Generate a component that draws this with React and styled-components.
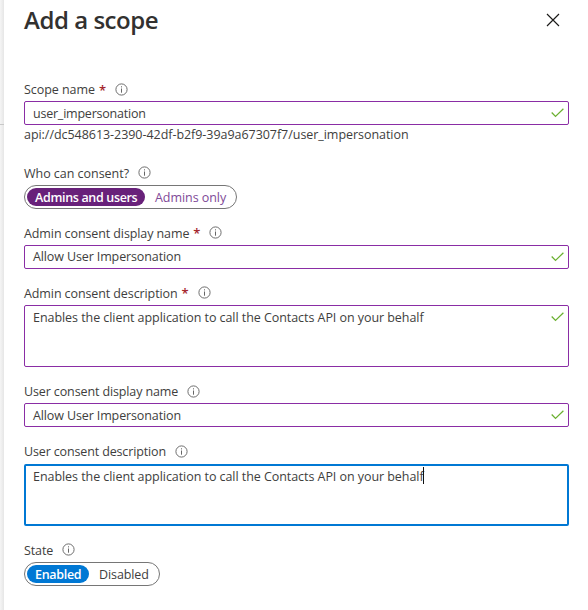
import React from 'react';
import styled, { createGlobalStyle } from 'styled-components';

const GlobalStyle = createGlobalStyle`
  * { box-sizing: border-box; }
  body {
    margin: 0;
    background: #fff;
    color: #403e3d;
    font: 12.5px/18px "Open Sans", "Noto Sans", sans-serif;
  }
  button { font: inherit; color: inherit; background: none; border: 0; padding: 0; }
`;

const Screen = styled.div`
  display: flex;
  width: 588px;
  height: 610px;
  overflow: hidden;
  background: #fff;
`;

const Backdrop = styled.div`
  flex: 0 0 4px;
  background: linear-gradient(90deg, #f5f5f5, #e6e6e6);
  padding-top: 124px;
`;

const BackdropRule = styled.div`
  height: 1px;
  background: #c8c8c8;
`;

const Panel = styled.section`
  flex: 1;
  padding: 0 19px 0 20px;
  background: #fff;
`;

const Header = styled.header`
  display: flex;
  justify-content: space-between;
  height: 77px;
`;

const Title = styled.h1`
  margin: 3px 0 0;
  color: #323130;
  font-size: 24px;
  line-height: 33px;
  font-weight: 600;
  letter-spacing: -0.46px;
`;

const CloseButton = styled.button`
  display: flex;
  width: 14px;
  height: 14px;
  margin: 13px 9px 0 0;
`;

const Text = styled.span`
  white-space: pre;
  letter-spacing: ${(p) => p.$track || 0}px;
`;

const Field = styled.div`
  margin-bottom: ${(p) => p.$gap || 0}px;
`;

const Label = styled.div`
  display: flex;
  align-items: center;
  height: 24px;
  padding-top: ${(p) => (p.$low ? 2 : 0)}px;
`;

const LabelText = styled(Text)`
  padding-top: ${(p) => (p.$drop ? 2 : 0)}px;
`;

const Required = styled.span`
  width: 7px;
  margin-left: 4px;
  color: #a4262c;
  font-size: 13px;
  font-weight: 600;
`;

const InfoIcon = styled.svg`
  flex: none;
  width: 13px;
  height: 13px;
  margin: -1px 0 0 9px;
`;

const Input = styled.div`
  display: flex;
  justify-content: space-between;
  align-items: flex-start;
  height: ${(p) => (p.$tall ? 62 : 24)}px;
  padding: ${(p) => (p.$focused ? '1px 4px 0 7px' : '2px 4px 0 8px')};
  border: ${(p) => (p.$focused ? '2px solid #0078d4' : '1px solid #8a2da5')};
  border-radius: 2px;
`;

const Value = styled.div`
  display: flex;
  padding-top: ${(p) => (p.$drop ? 1 : 0)}px;
`;

const Caret = styled.span`
  width: 1px;
  height: 17px;
  margin: -1px 0 0 -1px;
  background: #111;
`;

const Check = styled.svg`
  width: 13px;
  height: 10px;
  margin-top: 4px;
`;

const Hint = styled.div`
  height: 36px;
  padding-top: 1px;
`;

const Toggle = styled.div`
  display: inline-flex;
  vertical-align: top;
  width: ${(p) => p.$width}px;
  height: 24px;
  padding: 2px;
  border: 1px solid #767676;
  border-radius: 12px;
`;

const Option = styled.button`
  display: flex;
  align-items: center;
  height: 18px;
  padding: 2px 0 0 ${(p) => (p.$fill ? 8 : 10)}px;
  width: ${(p) => (p.$width ? `${p.$width}px` : 'auto')};
  border-radius: 9px;
  background: ${(p) => p.$fill || 'none'};
  color: ${(p) => p.$color || '#403e3d'};
  font-weight: ${(p) => (p.$fill ? 600 : 400)};
`;

function Info() {
  return (
    <InfoIcon viewBox="0 0 13 13" fill="none">
      <circle cx="6.5" cy="6.5" r="5.6" stroke="#666" strokeWidth="0.95" />
      <path d="M6.5 5.5v4.2M6.5 3.3v1.1" stroke="#666" />
    </InfoIcon>
  );
}

function FieldLabel({ children, track, required, low, drop }) {
  return (
    <Label $low={low}>
      <LabelText $track={track} $drop={drop}>{children}</LabelText>
      {required && <Required>*</Required>}
      <Info />
    </Label>
  );
}

function TextField({ value, track, tall, focused, drop }) {
  return (
    <Input $tall={tall} $focused={focused}>
      <Value $drop={drop}>
        <Text $track={track}>{value}</Text>
        {focused && <Caret />}
      </Value>
      {!focused && (
        <Check viewBox="0 0 13 10" fill="none">
          <path d="M0.7 4.5l3.8 3.9L12.4 0.8" stroke="#6bb030" strokeWidth="1.25" />
        </Check>
      )}
    </Input>
  );
}

const BEHALF = 'Enables the client application to call the Contacts API on your behalf';

export default function App() {
  return (
    <Screen>
      <GlobalStyle />
      <Backdrop><BackdropRule /></Backdrop>
      <Panel>
        <Header>
          <Title>Add a scope</Title>
          <CloseButton aria-label="Close">
            <svg width="14" height="14" viewBox="0 0 14 14" fill="none">
              <path d="M1 1l12 12M13 1L1 13" stroke="#1b1a19" strokeWidth="1.15" />
            </svg>
          </CloseButton>
        </Header>
        <Field>
          <FieldLabel required low track={-0.06}>Scope name</FieldLabel>
          <TextField drop value="user_impersonation" track={-0.22} />
          <Hint><Text $track={-0.045}>api://dc548613-2390-42df-b2f9-39a9a67307f7/user_impersonation</Text></Hint>
        </Field>
        <Field $gap={12}>
          <FieldLabel drop track={-0.03}>Who can consent?</FieldLabel>
          <Toggle $width={213}>
            <Option $fill="#68217a" $color="#fff" $width={118}><Text $track={-0.33}>Admins and users</Text></Option>
            <Option $color="#804998"><Text $track={-0.06}>Admins only</Text></Option>
          </Toggle>
        </Field>
        <Field $gap={12}>
          <FieldLabel required drop track={-0.1}>Admin consent display name</FieldLabel>
          <TextField value="Allow User Impersonation" track={-0.12} />
        </Field>
        <Field $gap={12}>
          <FieldLabel required drop track={-0.1}>Admin consent description</FieldLabel>
          <TextField tall drop value={BEHALF} track={-0.055} />
        </Field>
        <Field $gap={13}>
          <FieldLabel low track={-0.12}>User consent display name</FieldLabel>
          <TextField drop value="Allow User Impersonation" track={-0.12} />
        </Field>
        <Field $gap={12}>
          <FieldLabel track={-0.14}>User consent description</FieldLabel>
          <TextField tall focused drop value={BEHALF} track={-0.055} />
        </Field>
        <Field>
          <FieldLabel drop track={-0.1}>State</FieldLabel>
          <Toggle $width={136}>
            <Option $fill="#0078d4" $color="#fff" $width={62}><Text $track={-0.3}>Enabled</Text></Option>
            <Option><Text $track={-0.1}>Disabled</Text></Option>
          </Toggle>
        </Field>
      </Panel>
    </Screen>
  );
}
